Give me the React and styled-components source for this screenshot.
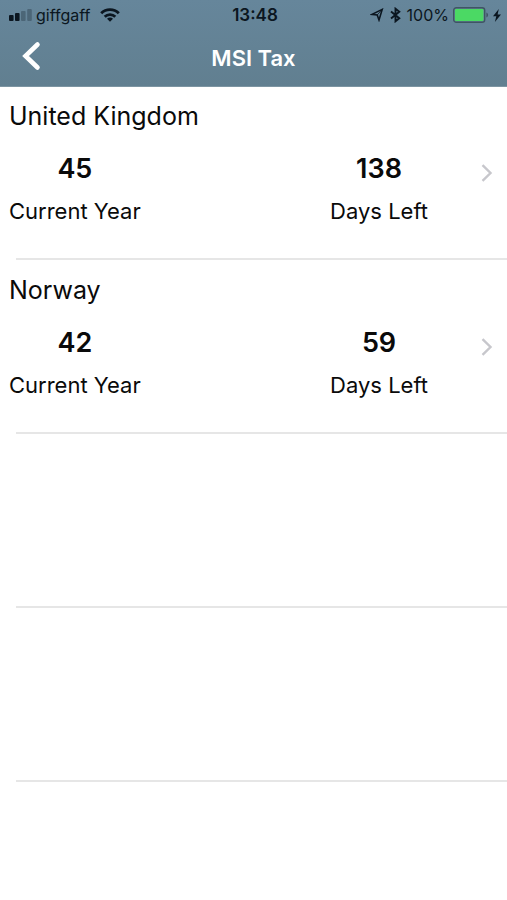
import { createGlobalStyle, styled } from "styled-components";

const GlobalStyle = createGlobalStyle`
    * {
        box-sizing: border-box;
    }

    body {
        margin: 0;
        background-color: #ffffff;
        color: #0a0a0a;
        font-family: Inter, "Liberation Sans", sans-serif;
    }
`

const Screen = styled.div`
    display: flex;
    flex-direction: column;
    min-height: 100vh;
    overflow: hidden;
`

const Header = styled.header`
    background: linear-gradient(#66869b, #617f90);
    border-bottom: 1px solid #7d95a2;
`

const StatusBar = styled.div`
    display: grid;
    grid-template-columns: 1fr auto 1fr;
    align-items: center;
    height: 30px;
    padding: 0 6px 0 9px;
    color: #0b1620;
    font-size: 16px;
    line-height: 20px;
`

const StatusGroup = styled.div`
    display: flex;
    align-items: center;
    justify-content: ${props => props.$end ? "flex-end" : "flex-start"};
    gap: ${props => props.$gap}px;

    > svg {
        flex: none;
    }
`

const Clock = styled.time`
    font-size: 17px;
    font-weight: 600;
`

const NavBar = styled.div`
    display: grid;
    grid-template-columns: 64px 1fr 64px;
    align-items: center;
    height: 56px;
`

const BackButton = styled.button`
    display: flex;
    align-items: center;
    height: 44px;
    padding: 0 0 4px 20px;
    border: none;
    background: none;
    cursor: pointer;
`

const Title = styled.h1`
    margin: 0;
    color: #ffffff;
    font-size: 22px;
    font-weight: 600;
    line-height: 28px;
    text-align: center;
`

const List = styled.ul`
    margin: 0;
    padding: 0;
    list-style: none;
`

const Row = styled.li`
    height: 174px;

    &::after {
        content: '';
        display: block;
        height: 2px;
        margin-left: 16px;
        background-color: #e6e6e6;
    }
`

const RowLink = styled.a`
    display: grid;
    grid-template-columns: 1fr auto;
    height: 171px;
    padding: 13px 14px 0 9px;
    color: inherit;
    text-decoration: none;
`

const EmptyCell = styled.div`
    height: 171px;
`

const Country = styled.h2`
    margin: 0;
    font-size: 25px;
    font-weight: 400;
    line-height: 32px;
`

const Stats = styled.div`
    display: flex;
    justify-content: space-between;
    padding-top: 21px;
`

const Stat = styled.div`
    display: flex;
    flex-direction: column;
    align-items: center;
    gap: 12px;
`

const Value = styled.span`
    font-size: 27px;
    font-weight: 600;
    line-height: 32px;
`

const Label = styled.span`
    font-size: 22px;
    line-height: 28px;
`

const Disclosure = styled.div`
    display: flex;
    padding: 64px 0 0 53px;
`

function SignalIcon () {
    return (
        <svg width="23" height="12" viewBox="0 0 23 12" fill="#0b1620" aria-hidden="true">
            <rect x="0" y="6" width="4.6" height="6" rx="1" />
            <rect x="6" y="4" width="4.6" height="8" rx="1" />
            <rect x="12" y="2" width="4.6" height="10" rx="1" opacity="0.28" />
            <rect x="18.2" y="0" width="4.6" height="12" rx="1" opacity="0.28" />
        </svg>
    );
}

function WifiIcon () {
    return (
        <svg width="20" height="14" viewBox="0 0 20 14" fill="none" stroke="#0b1620" strokeWidth="2.8" aria-hidden="true">
            <path d="M1.2 5.3C6 .3 14 .3 18.8 5.3" />
            <path d="M4.7 8.7C7.6 5.8 12.4 5.8 15.3 8.7" />
            <path d="M10 13.8L7 10.8C8.6 9.2 11.4 9.2 13 10.8Z" fill="#0b1620" stroke="none" />
        </svg>
    );
}

function LocationIcon () {
    return (
        <svg width="14" height="14" viewBox="0 0 14 14" fill="none" stroke="#0b1620" strokeWidth="1.6" strokeLinejoin="miter" aria-hidden="true">
            <path d="M12.2 1.4L2 6.4L7.2 7L9 12Z" />
            <path d="M12.2 1.4L7.2 7" strokeWidth="0.8" />
        </svg>
    );
}

function BluetoothIcon () {
    return (
        <svg width="11" height="16" viewBox="0 0 11 16" fill="none" stroke="#0b1620" strokeWidth="1.9" aria-hidden="true">
            <path d="M1 4.5L9.3 11.3L5.5 14.3V1.7L9.3 4.7L1 11.5" />
        </svg>
    );
}

function BatteryIcon () {
    return (
        <svg width="36" height="16" viewBox="0 0 36 16" aria-hidden="true">
            <rect x="0.7" y="0.7" width="31" height="14.6" rx="2.6" fill="none" stroke="#3f5563" strokeWidth="1.4" />
            <rect x="2" y="2" width="28.4" height="12" rx="1" fill="#4bd964" />
            <path d="M33.4 5.5C35.6 6.2 35.6 9.8 33.4 10.5Z" fill="#3f5563" />
        </svg>
    );
}

function BoltIcon () {
    return (
        <svg width="8" height="13" viewBox="0 0 8 13" fill="#0b1620" aria-hidden="true">
            <path d="M5.8 0L0 7.3H3.3L1.9 13L8 5.4H4.6Z" />
        </svg>
    );
}

function BackIcon () {
    return (
        <svg width="22" height="30" viewBox="0 0 22 30" fill="none" stroke="#ffffff" strokeWidth="4.6" strokeLinecap="round" strokeLinejoin="miter" aria-hidden="true">
            <path d="M17.5 3.5L5.5 15L17.5 26.5" />
        </svg>
    );
}

function ChevronIcon () {
    return (
        <svg width="12" height="18" viewBox="0 0 12 18" fill="none" stroke="#c7c7cc" strokeWidth="2.4" aria-hidden="true">
            <path d="M1.5 1.2L9.5 9L1.5 16.8" />
        </svg>
    );
}

const countries = [
    { name: "United Kingdom", used: 45, left: 138 },
    { name: "Norway", used: 42, left: 59 },
];

function CountryRow ({ country }) {
    return (
        <Row>
            <RowLink href="#">
                <div>
                    <Country>{country.name}</Country>
                    <Stats>
                        <Stat>
                            <Value>{country.used}</Value>
                            <Label>Current Year</Label>
                        </Stat>
                        <Stat>
                            <Value>{country.left}</Value>
                            <Label>Days Left</Label>
                        </Stat>
                    </Stats>
                </div>
                <Disclosure>
                    <ChevronIcon />
                </Disclosure>
            </RowLink>
        </Row>
    );
}

function App () {
    return (
        <Screen>
            <GlobalStyle />
            <Header>
                <StatusBar>
                    <StatusGroup $gap={10}>
                        <StatusGroup $gap={4}>
                            <SignalIcon />
                            <span>giffgaff</span>
                        </StatusGroup>
                        <WifiIcon />
                    </StatusGroup>
                    <Clock>13:48</Clock>
                    <StatusGroup $gap={4} $end>
                        <StatusGroup $gap={6}>
                            <LocationIcon />
                            <BluetoothIcon />
                            <span>100%</span>
                        </StatusGroup>
                        <BatteryIcon />
                        <BoltIcon />
                    </StatusGroup>
                </StatusBar>
                <NavBar>
                    <BackButton aria-label="Back">
                        <BackIcon />
                    </BackButton>
                    <Title>MSI Tax</Title>
                </NavBar>
            </Header>
            <List>
                {countries.map(country => (
                    <CountryRow key={country.name} country={country} />
                ))}
                <Row><EmptyCell /></Row>
                <Row><EmptyCell /></Row>
            </List>
        </Screen>
    );
}

export default App;
